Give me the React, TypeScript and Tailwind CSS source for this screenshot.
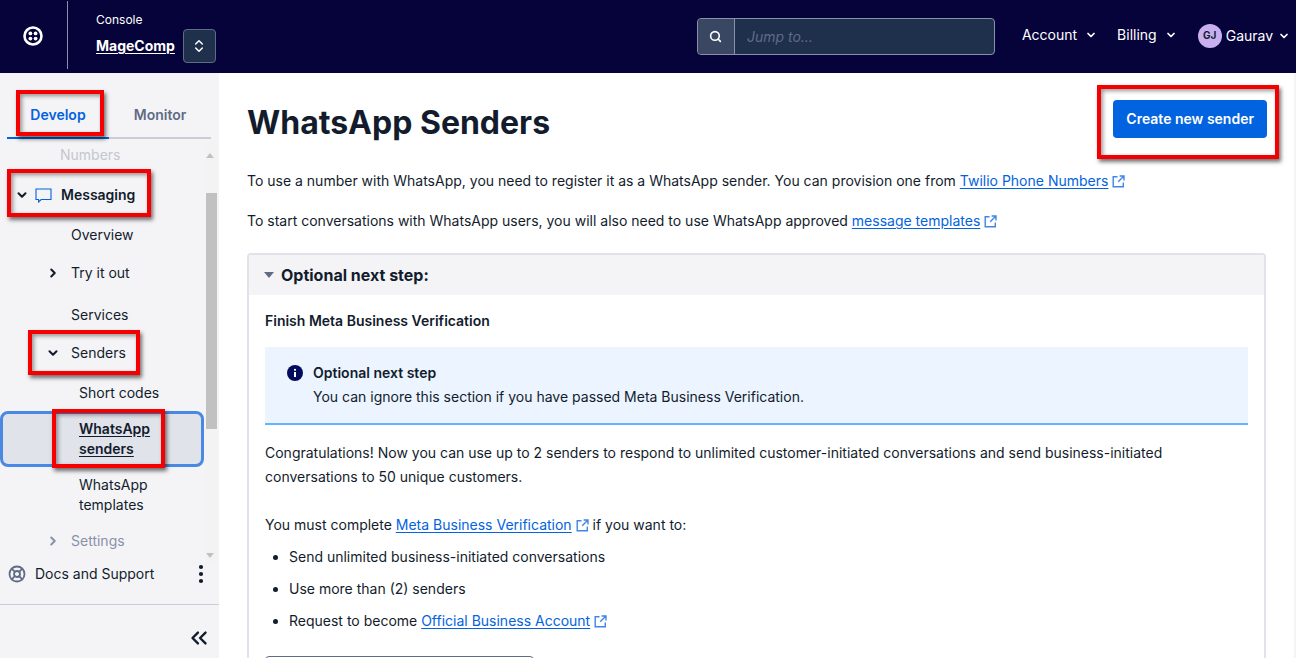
import { ChevronDown, ChevronRight, ChevronsLeft, ChevronsUpDown, EllipsisVertical, LifeBuoy, Search } from "lucide-react"
import type { ReactNode } from "react"

function TwilioLogo() {
  return (
    <svg width="20" height="20" viewBox="0 0 20 20" fill="none">
      <circle cx="10" cy="10" r="8.5" stroke="white" strokeWidth="2.6" />
      <circle cx="7.4" cy="7.4" r="1.9" fill="white" />
      <circle cx="12.6" cy="7.4" r="1.9" fill="white" />
      <circle cx="7.4" cy="12.6" r="1.9" fill="white" />
      <circle cx="12.6" cy="12.6" r="1.9" fill="white" />
    </svg>
  )
}

function LinkOutIcon() {
  return (
    <svg className="inline-block ml-1 mb-[1px]" width="13" height="13" viewBox="0 0 13 13" fill="none" stroke="#3f86e6" strokeWidth="1.4">
      <path d="M5.5 1.7H1.2v10.1h10.1V7.5" />
      <path d="M7.6 1h4.4v4.4M12 1 6.2 6.8" />
    </svg>
  )
}

function MessageIcon() {
  return (
    <svg className="mr-[9px]" width="17" height="15" viewBox="0 0 17 15" fill="none" stroke="#0263e0" strokeWidth="1.1">
      <path d="M1 1h15v10.5H6.2L3.6 14v-2.5H1z" />
    </svg>
  )
}

function RedBox({ className }: { className: string }) {
  return <div className={`absolute border-4 border-[#f40000] shadow-[2px_3px_4px_rgba(0,0,0,0.55),inset_2px_2px_4px_rgba(0,0,0,0.4)] pointer-events-none ${className}`} />
}

function ExtLink({ children }: { children: ReactNode }) {
  return (
    <>
      <a className="text-[#0263e0] underline underline-offset-2">{children}</a>
      <LinkOutIcon />
    </>
  )
}

function HeaderMenu({ label }: { label: string }) {
  return (
    <div className="flex items-center gap-2 text-white text-sm">
      {label}
      <ChevronDown className="w-3 h-3" strokeWidth={3.5} />
    </div>
  )
}

function Header() {
  return (
    <header className="h-[73px] shrink-0 bg-[#06033a] flex items-center text-white">
      <div className="w-[68px] h-[68px] shrink-0 flex items-center justify-center border-r border-[#8891aa] mb-[3px]">
        <div className="mt-[2px] mr-[1px]"><TwilioLogo /></div>
      </div>
      <div className="ml-7 -mt-[5px]">
        <div className="text-xs leading-4 mb-2">Console</div>
        <div className="text-sm font-bold leading-5 underline underline-offset-2">MageComp</div>
      </div>
      <div className="ml-2 mt-[19px] w-[33px] h-[34px] rounded border border-[#606b85] bg-[#1f304c] flex items-center justify-center">
        <ChevronsUpDown className="w-4 h-4" strokeWidth={2.2} />
      </div>
      <div className="ml-[481px] w-[298px] h-[37px] flex rounded border border-[#8891aa] bg-[#1f304c]">
        <div className="w-[37px] flex items-center justify-center bg-[#394762] border-r border-[#8891aa] rounded-l">
          <Search className="w-[13px] h-[13px]" strokeWidth={3} />
        </div>
        <div className="pl-3 flex items-center text-sm italic text-[#606b85]">Jump to...</div>
      </div>
      <div className="ml-[27px] flex items-center gap-5 -mt-[3px]">
        <HeaderMenu label="Account" />
        <HeaderMenu label="Billing" />
        <div className="flex items-center gap-1 text-white text-sm ml-[1px] mt-[1px]">
          <div className="w-6 h-6 rounded-full bg-[#c8aff0] text-[#121c2d] text-[10px] font-bold flex items-center justify-center">GJ</div>
          <span>Gaurav</span>
          <ChevronDown className="w-3 h-3 ml-[1px]" strokeWidth={3.5} />
        </div>
      </div>
    </header>
  )
}

function Sidebar() {
  return (
    <aside className="w-[219px] shrink-0 bg-[#f4f4f6] flex flex-col text-sm text-[#121c2d]">
      <div className="mt-4 ml-[7px] mr-2 h-[50px] flex border-b-2 border-[#cacdd8] font-semibold">
        <div className="w-[102px] -mb-[2px] pt-[3px] border-b-2 border-[#0263e0] text-[#0263e0] flex items-center justify-center">Develop</div>
        <div className="w-[102px] pt-[3px] text-[#606b85] flex items-center justify-center">Monitor</div>
      </div>

      <div className="relative h-[423px] pt-[1px] overflow-hidden">
        <div className="absolute right-[2px] top-0 bottom-0 w-[11px] bg-[#f3f3f4]">
          <div className="absolute top-[54px] h-[236px] w-full bg-[#c1c1c1]" />
        </div>
        <div className="h-[30px] pl-[60px] flex items-center text-[#c4c6d0]">Numbers</div>
        <div className="h-[50px] pl-[15px] flex items-center font-semibold">
          <ChevronDown className="w-3.5 h-3.5 mr-[6px]" strokeWidth={3.5} />
          <MessageIcon />
          Messaging
        </div>
        <div className="h-[30px] pl-[71px] flex items-center">Overview</div>
        <div className="h-[46px] pl-[46px] flex items-center">
          <ChevronRight className="w-3.5 h-3.5 mr-[11px]" strokeWidth={3.5} />
          Try it out
        </div>
        <div className="h-[38px] pl-[71px] flex items-center">Services</div>
        <div className="h-[38px] pl-[46px] flex items-center">
          <ChevronDown className="w-3.5 h-3.5 mr-[11px]" strokeWidth={3.5} />
          Senders
        </div>
        <div className="h-[42px] pl-[79px] flex items-center">Short codes</div>
        <div className="relative -mt-[3px] mb-1 mr-[15px] h-14 pl-[76px] rounded-lg border-[3px] border-[#4a89e3] bg-[#e1e3ea] flex items-center font-semibold underline underline-offset-2 leading-5">
          WhatsApp senders
        </div>
        <div className="h-[48px] pl-[79px] pr-4 flex items-center leading-5">WhatsApp templates</div>
        <div className="mt-[7px] h-[30px] pl-[46px] flex items-center text-[#8891aa]">
          <ChevronRight className="w-3.5 h-3.5 mr-[11px]" strokeWidth={3.5} />
          Settings
        </div>
        <div className="absolute right-[5px] top-[14px] w-0 h-0 border-x-4 border-x-transparent border-b-[5px] border-b-[#c1c1c1]" />
        <div className="absolute right-[5px] bottom-[4px] w-0 h-0 border-x-4 border-x-transparent border-t-[5px] border-t-[#c1c1c1]" />
      </div>

      <div className="h-6 pl-2 pr-[6px] flex items-center">
        <LifeBuoy className="w-[18px] h-[18px] text-[#606b85] mr-[9px]" strokeWidth={2.4} />
        <span>Docs and Support</span>
        <EllipsisVertical className="w-6 h-6 ml-auto" strokeWidth={2.2} />
      </div>
      <div className="mt-[18px] flex-1 border-t border-[#cacdd8] flex items-center justify-end pr-[7px] pt-3">
        <ChevronsLeft className="w-[26px] h-[26px]" strokeWidth={2.2} />
      </div>
    </aside>
  )
}

function Main() {
  return (
    <main className="flex-1 bg-white pl-7 pr-7 text-sm text-[#121c2d] overflow-hidden border-r-2 border-[#f4f4f6]">
      <div className="h-[87px] flex items-start justify-between">
        <h1 className="mt-[30px] text-[32px] leading-10 font-bold">WhatsApp Senders</h1>
        <button className="mt-[27px] -mr-[1px] h-[38px] px-[13px] rounded bg-[#0263e0] text-white font-semibold">Create new sender</button>
      </div>
      <p className="mt-[9px] leading-6">
        To use a number with WhatsApp, you need to register it as a WhatsApp sender. You can provision one from <ExtLink>Twilio Phone Numbers</ExtLink>
      </p>
      <p className="mt-4 leading-6">
        To start conversations with WhatsApp users, you will also need to use WhatsApp approved <ExtLink>message templates</ExtLink>
      </p>
      <section className="mt-5 rounded-t border-2 border-[#e1e3ea] border-b-0">
        <div className="h-[40px] bg-[#f4f4f6] flex items-center pl-[15px] text-base font-bold">
          <div className="w-0 h-0 mr-[7px] border-x-[5px] border-x-transparent border-t-[6px] border-t-[#606b85]" />
          Optional next step:
        </div>
        <div className="px-4">
          <div className="mt-[14px] leading-6 font-semibold">Finish Meta Business Verification</div>
          <div className="mt-[14px] h-[78px] bg-[#ebf4ff] border-b-2 border-[#66b3ff] pl-[22px] flex items-start">
            <div className="mt-[18px] mr-[10px] w-4 h-4 shrink-0 rounded-full bg-[#030b5d] text-white flex items-center justify-center">
              <svg width="16" height="16" viewBox="0 0 16 16"><circle cx="8" cy="4.8" r="1.1" fill="white" /><rect x="7" y="7" width="2" height="5" fill="white" /></svg>
            </div>
            <div className="pt-[14px]">
              <div className="font-semibold leading-6">Optional next step</div>
              <div className="leading-6">You can ignore this section if you have passed Meta Business Verification.</div>
            </div>
          </div>
          <p className="mt-4 leading-6">
            Congratulations! Now you can use up to 2 senders to respond to unlimited customer-initiated conversations and send business-initiated conversations to 50 unique customers.
          </p>
          <p className="mt-6 leading-6">
            You must complete <ExtLink>Meta Business Verification</ExtLink> if you want to:
          </p>
          <ul className="mt-2 ml-6 list-disc space-y-2 leading-6">
            <li>Send unlimited business-initiated conversations</li>
            <li>Use more than (2) senders</li>
            <li>Request to become <ExtLink>Official Business Account</ExtLink></li>
          </ul>
          <div className="mt-[23px] w-[269px] h-10 rounded border border-[#606b85]" />
        </div>
      </section>
    </main>
  )
}

export default function App() {
  return (
    <div className="relative h-[658px] w-[1296px] overflow-hidden flex flex-col font-['Inter',sans-serif]">
      <Header />
      <div className="flex flex-1 min-h-0">
        <Sidebar />
        <Main />
      </div>
      <RedBox className="left-[16px] top-[90px] w-[88px] h-[46px]" />
      <RedBox className="left-[7px] top-[169px] w-[144px] h-[48px]" />
      <RedBox className="left-[28px] top-[330px] w-[112px] h-[45px]" />
      <RedBox className="left-[52px] top-[409px] w-[113px] h-[59px]" />
      <RedBox className="left-[1097px] top-[85px] w-[182px] h-[74px]" />
    </div>
  )
}
